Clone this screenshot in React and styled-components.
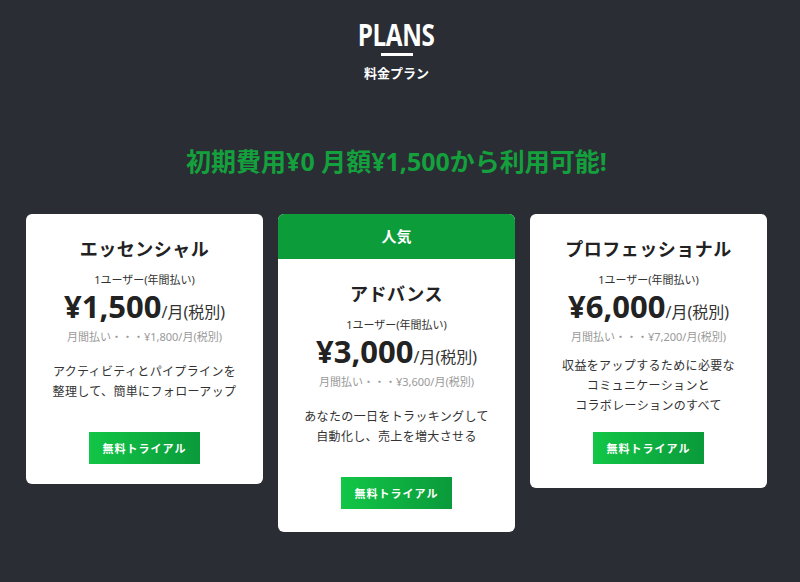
import React from "react";
import styled, { createGlobalStyle } from "styled-components";

const GlobalStyle = createGlobalStyle`
  html, body {
    margin: 0;
    padding: 0;
    background: #2a2d34;
  }
  body {
    font-family: "Noto Sans", "Noto Sans CJK JP", sans-serif;
    color: #222;
  }
`;

const Page = styled.div`
  width: 793px;
  min-height: 582px;
  padding-top: 19px;
  display: flex;
  flex-direction: column;
  align-items: center;
`;

const Heading = styled.h1`
  margin: 0;
  font-family: "Open Sans", "Noto Sans", sans-serif;
  font-weight: 700;
  font-size: 31px;
  line-height: 30px;
  letter-spacing: -0.5px;
  color: #fff;
  transform: scaleX(0.78);
`;

const Rule = styled.div`
  width: 32px;
  height: 3px;
  margin-top: 4px;
  background: #fff;
`;

const SubHeading = styled.div`
  margin-top: 8px;
  font-family: "Noto Sans CJK JP", sans-serif;
  font-weight: 700;
  font-size: 13px;
  line-height: 18px;
  color: #fff;
`;

const Lead = styled.p`
  margin: 62px 0 0;
  font-weight: 700;
  font-size: 25px;
  line-height: 34px;
  color: #14a03c;
`;

const Cards = styled.div`
  margin-top: 36px;
  display: flex;
  align-items: flex-start;
  gap: 15px;
`;

const Card = styled.div`
  width: 237px;
  background: #fff;
  border-radius: 6px;
  overflow: hidden;
  text-align: center;
`;

const Badge = styled.div`
  height: 45px;
  background: #0c9c39;
  color: #fff;
  font-weight: 700;
  font-size: 15px;
  line-height: 45px;
`;

const Body = styled.div`
  padding: 23px 16px ${(p) => p.$bottom}px;
  display: flex;
  flex-direction: column;
  align-items: center;
`;

const Title = styled.h2`
  margin: 0;
  font-size: 18px;
  line-height: 24px;
  letter-spacing: 0.5px;
  font-weight: 700;
  color: #222;
`;

const Unit = styled.div`
  margin-top: 11px;
  font-size: 11px;
  line-height: 16px;
  color: #333;
`;

const Price = styled.div`
  font-size: 31px;
  line-height: 36px;
  font-weight: 700;
  color: #222;

  & small {
    font-size: 16px;
    font-weight: 400;
    color: #333;
  }
`;

const Monthly = styled.div`
  margin-top: -1px;
  font-size: 11px;
  line-height: 16px;
  color: #999;
`;

const Desc = styled.p`
  margin: ${(p) => p.$top}px 0 0;
  font-size: 12px;
  line-height: 20px;
  letter-spacing: 0.35px;
  color: #333;
`;

const Trial = styled.button`
  margin-top: ${(p) => p.$top}px;
  width: 111px;
  height: 32px;
  border: 0;
  border-radius: 0;
  background: linear-gradient(90deg, #12c646 0%, #0a9a3b 100%);
  color: #fff;
  font-family: "Noto Sans CJK JP", sans-serif;
  font-weight: 700;
  font-size: 11px;
  letter-spacing: 1px;
  cursor: pointer;
`;

const plans = [
  {
    name: "エッセンシャル",
    price: "¥1,500",
    monthly: "¥1,800",
    desc: ["アクティビティとパイプラインを", "整理して、簡単にフォローアップ"],
    descTop: 17,
    ctaTop: 30,
    bottom: 20,
  },
  {
    name: "アドバンス",
    popular: true,
    price: "¥3,000",
    monthly: "¥3,600",
    desc: ["あなたの一日をトラッキングして", "自動化し、売上を増大させる"],
    descTop: 17,
    ctaTop: 30,
    bottom: 23,
  },
  {
    name: "プロフェッショナル",
    price: "¥6,000",
    monthly: "¥7,200",
    desc: ["収益をアップするために必要な", "コミュニケーションと", "コラボレーションのすべて"],
    descTop: 11,
    ctaTop: 16,
    bottom: 24,
  },
];

const App = () => {
  return (
    <>
      <GlobalStyle />
      <Page>
        <Heading>PLANS</Heading>
        <Rule />
        <SubHeading>料金プラン</SubHeading>
        <Lead>初期費用¥0 月額¥1,500から利用可能!</Lead>
        <Cards>
          {plans.map((plan) => (
            <Card key={plan.name}>
              {plan.popular && <Badge>人気</Badge>}
              <Body $bottom={plan.bottom}>
                <Title>{plan.name}</Title>
                <Unit>1ユーザー(年間払い)</Unit>
                <Price>
                  {plan.price}
                  <small>/月(税別)</small>
                </Price>
                <Monthly>月間払い・・・{plan.monthly}/月(税別)</Monthly>
                <Desc $top={plan.descTop}>
                  {plan.desc.map((line, i) => (
                    <React.Fragment key={i}>
                      {i > 0 && <br />}
                      {line}
                    </React.Fragment>
                  ))}
                </Desc>
                <Trial $top={plan.ctaTop}>無料トライアル</Trial>
              </Body>
            </Card>
          ))}
        </Cards>
      </Page>
    </>
  );
};

export default App;
